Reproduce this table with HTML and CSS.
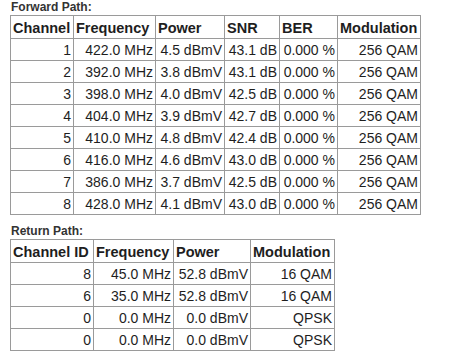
FILE: index.html
```html
<!DOCTYPE html>
<html>
<head>
<meta charset="utf-8">
<link rel="stylesheet" href="styles.css">
</head>
<body>
<div class="page">
  <div class="caption">Forward Path:</div>
  <table class="grid">
    <tr>
      <th class="fw-ch">Channel</th>
      <th class="fw-fr">Frequency</th>
      <th class="fw-pw">Power</th>
      <th class="fw-snr">SNR</th>
      <th class="fw-ber">BER</th>
      <th class="fw-mod">Modulation</th>
    </tr>
    <tr><td>1</td><td>422.0 MHz</td><td>4.5 dBmV</td><td>43.1 dB</td><td>0.000 %</td><td>256 QAM</td></tr>
    <tr><td>2</td><td>392.0 MHz</td><td>3.8 dBmV</td><td>43.1 dB</td><td>0.000 %</td><td>256 QAM</td></tr>
    <tr><td>3</td><td>398.0 MHz</td><td>4.0 dBmV</td><td>42.5 dB</td><td>0.000 %</td><td>256 QAM</td></tr>
    <tr><td>4</td><td>404.0 MHz</td><td>3.9 dBmV</td><td>42.7 dB</td><td>0.000 %</td><td>256 QAM</td></tr>
    <tr><td>5</td><td>410.0 MHz</td><td>4.8 dBmV</td><td>42.4 dB</td><td>0.000 %</td><td>256 QAM</td></tr>
    <tr><td>6</td><td>416.0 MHz</td><td>4.6 dBmV</td><td>43.0 dB</td><td>0.000 %</td><td>256 QAM</td></tr>
    <tr><td>7</td><td>386.0 MHz</td><td>3.7 dBmV</td><td>42.5 dB</td><td>0.000 %</td><td>256 QAM</td></tr>
    <tr><td>8</td><td>428.0 MHz</td><td>4.1 dBmV</td><td>43.0 dB</td><td>0.000 %</td><td>256 QAM</td></tr>
  </table>
  <div class="caption caption-return">Return Path:</div>
  <table class="grid">
    <tr>
      <th class="rt-ch">Channel ID</th>
      <th class="rt-fr">Frequency</th>
      <th class="rt-pw">Power</th>
      <th class="rt-mod">Modulation</th>
    </tr>
    <tr><td>8</td><td>45.0 MHz</td><td>52.8 dBmV</td><td>16 QAM</td></tr>
    <tr><td>6</td><td>35.0 MHz</td><td>52.8 dBmV</td><td>16 QAM</td></tr>
    <tr><td>0</td><td>0.0 MHz</td><td>0.0 dBmV</td><td>QPSK</td></tr>
    <tr><td>0</td><td>0.0 MHz</td><td>0.0 dBmV</td><td>QPSK</td></tr>
  </table>
</div>
</body>
</html>
```
FILE: styles.css
```css
html, body {
  margin: 0;
  padding: 0;
  background: #ffffff;
}

.page {
  padding-left: 10px;
  font-family: "Liberation Sans", Arial, sans-serif;
  color: #1e1e1e;
}

.caption {
  font-size: 12px;
  font-weight: bold;
  color: #333333;
  height: 15px;
  line-height: 15px;
  padding-left: 1px;
}

.caption-return {
  margin-top: 9px;
}

.grid {
  border-collapse: separate;
  border-spacing: 0;
  table-layout: fixed;
  border-left: 1px solid #9a9a9a;
  border-top: 1px solid #9a9a9a;
}

.grid th,
.grid td {
  box-sizing: border-box;
  border-right: 1px solid #9a9a9a;
  border-bottom: 1px solid #9a9a9a;
  padding: 0 2px;
  white-space: nowrap;
}

.grid th {
  height: 23px;
  font-size: 14.5px;
  font-weight: bold;
  text-align: left;
  padding-top: 1px;
}

.grid td {
  height: 22px;
  font-size: 14px;
  text-align: right;
}

.fw-ch { width: 63px; }
.fw-fr { width: 82px; }
.fw-pw { width: 69px; }
.fw-snr { width: 55px; }
.fw-ber { width: 58px; }
.fw-mod { width: 83px; }

.rt-ch { width: 83px; }
.rt-fr { width: 80px; }
.rt-pw { width: 77px; }
.rt-mod { width: 84px; }
```
